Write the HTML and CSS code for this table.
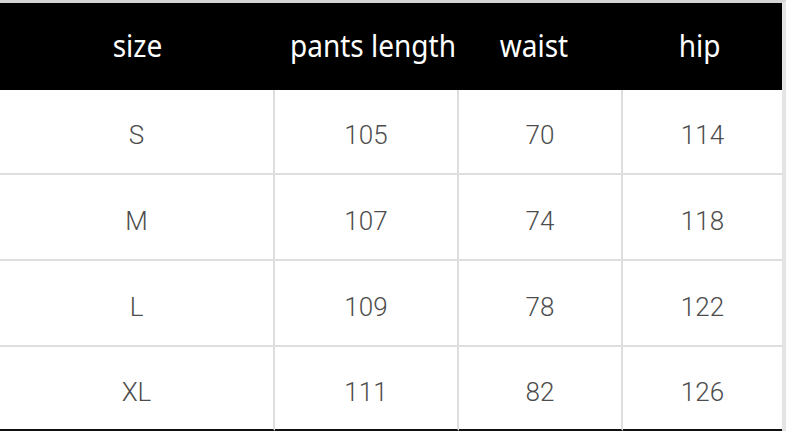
FILE: index.html
```html
<!DOCTYPE html>
<html>
<head>
<meta charset="utf-8">
<link rel="stylesheet" href="styles.css">
</head>
<body>
<div class="page">
  <div class="size-table">
    <div class="cell head h1"><span class="label">size</span></div>
    <div class="cell head h2"><span class="label">pants length</span></div>
    <div class="cell head h3"><span class="label">waist</span></div>
    <div class="cell head h4"><span class="label">hip</span></div>

    <div class="cell">S</div>
    <div class="cell">105</div>
    <div class="cell">70</div>
    <div class="cell last-col">114</div>

    <div class="cell">M</div>
    <div class="cell">107</div>
    <div class="cell">74</div>
    <div class="cell last-col">118</div>

    <div class="cell">L</div>
    <div class="cell">109</div>
    <div class="cell">78</div>
    <div class="cell last-col">122</div>

    <div class="cell last-row">XL</div>
    <div class="cell last-row">111</div>
    <div class="cell last-row">82</div>
    <div class="cell last-row last-col">126</div>
  </div>
</div>
</body>
</html>
```

FILE: styles.css
```css
html, body {
  margin: 0;
  padding: 0;
  background: #ffffff;
}

.page {
  width: 786px;
  height: 431px;
  box-sizing: border-box;
  border-top: 3px solid #d4d4d4;
  border-right: 4px solid #e4e4e4;
  border-bottom: 1px solid #d8d8d8;
  background: #ffffff;
}

.size-table {
  display: grid;
  grid-template-columns: 275px 184px 164px 159px;
  grid-template-rows: 87px 85px 86px 86px 84px;
}

.cell {
  display: flex;
  align-items: center;
  justify-content: center;
  box-sizing: border-box;
  padding-top: 7px;
  border-right: 2px solid #dedede;
  border-bottom: 2px solid #dedede;
  font-family: Roboto, "Liberation Sans", sans-serif;
  font-weight: 300;
  font-size: 26px;
  color: #4d4d4d;
  white-space: nowrap;
}

.cell.head {
  background: #000000;
  color: #ffffff;
  border: none;
  padding-top: 0;
  padding-bottom: 4px;
  font-family: "Noto Sans", "Open Sans", sans-serif;
  font-weight: 400;
  font-size: 28px;
}

.label {
  display: inline-block;
  transform: scaleY(1.08);
}

.cell.h1 { padding-left: 0; }
.cell.h2 { padding-left: 12px; }
.cell.h3 { padding-right: 14px; }
.cell.h4 { padding-right: 6px; }

.cell.last-col {
  border-right: none;
}

.cell.last-row {
  border-bottom: 2px solid #111111;
}
```
